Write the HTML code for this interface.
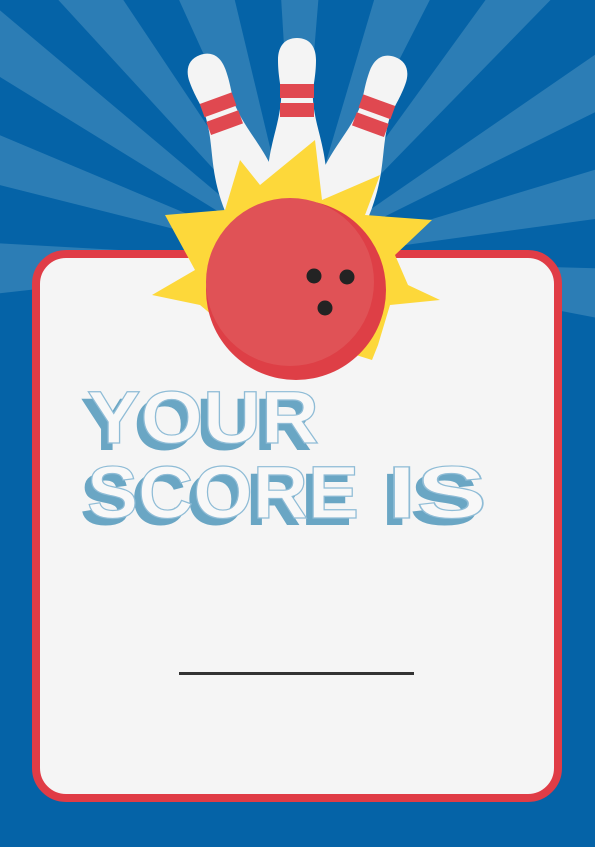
<!DOCTYPE html>
<html><head><meta charset="utf-8"><style>html,body{margin:0;padding:0}body{width:595px;height:842px;overflow:hidden;background:#0563a7}</style></head>
<body>
<svg width="595" height="842" viewBox="0 0 595 842" xmlns="http://www.w3.org/2000/svg">
<defs>
<g id="pin">
<path d="M0,0 C-12,0 -19,8 -19,22 C-19,40 -15,50 -16,62 C-18,90 -30,110 -30,150 L-28,230 L28,230 L30,150 C30,110 18,90 16,62 C15,50 19,40 19,22 C19,8 12,0 0,0Z" fill="#f4f4f4"/>
<rect x="-17" y="46" width="34" height="14" fill="#e04850"/>
<rect x="-17" y="65" width="34" height="14" fill="#e04850"/>
</g>
</defs>
<rect width="595" height="842" fill="#0563a7"/>
<g fill="#2c7db5">
<polygon points="297,260 -60,-40 -60,40"/>
<polygon points="297,260 -60,110 -60,170"/>
<polygon points="297,260 -60,240 -60,300"/>
<polygon points="297,260 40,-20 110,-20"/>
<polygon points="297,260 170,-20 230,-20"/>
<polygon points="297,260 280,-20 320,-20"/>
<polygon points="297,260 380,-20 440,-20"/>
<polygon points="297,260 500,-20 570,-20"/>
<polygon points="297,260 660,10 660,80"/>
<polygon points="297,260 660,150 660,210"/>
<polygon points="297,260 660,270 660,330"/>
</g>
<rect x="36" y="254" width="522" height="544" rx="30" fill="#f5f5f5" stroke="#e03c46" stroke-width="8"/>
<use href="#pin" transform="translate(200,55) rotate(-20)"/>
<use href="#pin" transform="translate(395,57) rotate(20)"/>
<use href="#pin" transform="translate(297,38)"/>
<path d="M165,215 L225,210 L240,160 L260,185 L315,140 L322,200 L380,175 L365,215 L432,220 L395,255 L408,285 L440,300 L390,305 L378,345 L372,360 L340,350 L230,330 L200,305 L152,295 L195,270 Z" fill="#fdd83a"/>
<circle cx="296" cy="290" r="90" fill="#de3f46"/>
<circle cx="290" cy="282" r="84" fill="#e05256"/>
<circle cx="314" cy="276" r="7.5" fill="#232323"/><circle cx="347" cy="277" r="7.5" fill="#232323"/><circle cx="325" cy="308" r="7.5" fill="#232323"/>
<g font-family="Liberation Sans, sans-serif" font-weight="bold" font-size="74">
<text x="80" y="450" textLength="232" lengthAdjust="spacingAndGlyphs" fill="#6aa6c4">YOUR</text>
<text x="80" y="525" textLength="272" lengthAdjust="spacingAndGlyphs" fill="#6aa6c4">SCORE</text>
<text x="380" y="525" textLength="100" lengthAdjust="spacingAndGlyphs" fill="#6aa6c4">IS</text>
<text x="87" y="443" textLength="232" lengthAdjust="spacingAndGlyphs" fill="#f8f8f8" stroke="#8fbcd6" stroke-width="1.2">YOUR</text>
<text x="87" y="518" textLength="272" lengthAdjust="spacingAndGlyphs" fill="#f8f8f8" stroke="#8fbcd6" stroke-width="1.2">SCORE</text>
<text x="387" y="518" textLength="100" lengthAdjust="spacingAndGlyphs" fill="#f8f8f8" stroke="#8fbcd6" stroke-width="1.2">IS</text>
</g>
<rect x="179" y="672" width="235" height="3" fill="#333"/>
</svg>
</body></html>
